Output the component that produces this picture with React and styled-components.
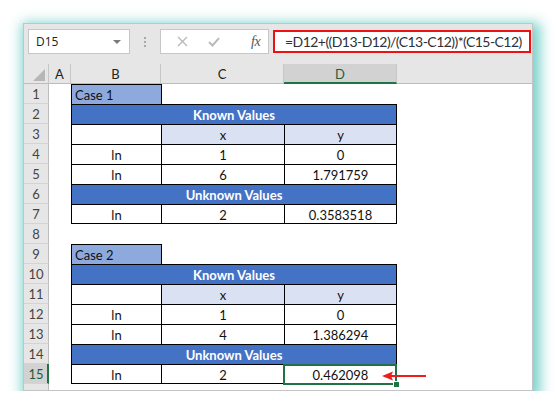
import React from "react";
import styled, { createGlobalStyle } from "styled-components";

const GlobalStyle = createGlobalStyle`
  html, body {
    margin: 0;
    padding: 0;
    background: #ffffff;
  }
  body {
    font-family: Lato, "Liberation Sans", sans-serif;
  }
`;

const COLS = "25px 22px 90px 123px 113px 1fr";
const GREEN = "#217346";
const LINE = "#000000";

const sheetRows = [
  { n: 1, type: "case", label: "Case 1" },
  { n: 2, type: "title", label: "Known Values" },
  { n: 3, type: "xy" },
  { n: 4, type: "data", values: ["ln", "1", "0"] },
  { n: 5, type: "data", values: ["ln", "6", "1.791759"] },
  { n: 6, type: "title", label: "Unknown Values" },
  { n: 7, type: "data", values: ["ln", "2", "0.3583518"], last: true },
  { n: 8, type: "empty" },
  { n: 9, type: "case", label: "Case 2" },
  { n: 10, type: "title", label: "Known Values" },
  { n: 11, type: "xy" },
  { n: 12, type: "data", values: ["ln", "1", "0"] },
  { n: 13, type: "data", values: ["ln", "4", "1.386294"] },
  { n: 14, type: "title", label: "Unknown Values" },
  { n: 15, type: "data", values: ["ln", "2", "0.462098"], last: true, active: true },
  { n: 16, type: "empty", hidden: true },
];

export default function App() {
  return (
    <>
      <GlobalStyle />
      <Window>
        <Toolbar>
          <NameBox>
            <span>D15</span>
            <DropCaret />
          </NameBox>
          <Grip>
            <i />
            <i />
            <i />
          </Grip>
          <FxButtons>
            <svg width="11" height="11" viewBox="0 0 11 11">
              <path d="M1 1 L10 10 M10 1 L1 10" stroke="#b9b9b9" strokeWidth="1.4" fill="none" />
            </svg>
            <svg width="12" height="10" viewBox="0 0 12 10">
              <path d="M1 5 L4.5 8.5 L11 1.2" stroke="#b9b9b9" strokeWidth="2" fill="none" />
            </svg>
            <FxLabel>fx</FxLabel>
          </FxButtons>
          <FormulaBox>=D12+((D13-D12)/(C13-C12))*(C15-C12)</FormulaBox>
        </Toolbar>

        <Sheet>
          <Corner>
            <CornerMark />
          </Corner>
          <ColHead>A</ColHead>
          <ColHead>B</ColHead>
          <ColHead>C</ColHead>
          <ColHead $selected>D</ColHead>
          <ColHead $last />

          {sheetRows.map((row) => (
            <React.Fragment key={row.n}>
              <RowHead $selected={row.active}>{row.hidden ? "" : row.n}</RowHead>
              <Cell />
              {renderRow(row)}
              <Cell />
            </React.Fragment>
          ))}

          <Arrow width="44" height="10" viewBox="0 0 44 10">
            <path d="M8 5 L44 5" stroke="#ee1c1c" strokeWidth="2" />
            <path d="M0 5 L11 0.5 L9 5 L11 9.5 Z" fill="#ee1c1c" />
          </Arrow>
        </Sheet>
      </Window>
    </>
  );
}

function renderRow(row) {
  if (row.type === "case") {
    return (
      <>
        <Cell $fill="#8ea9db" $bt $bl $align="flex-start">
          {row.label}
        </Cell>
        <Cell $bl />
        <Cell />
      </>
    );
  }
  if (row.type === "title") {
    return (
      <Cell $span={3} $fill="#4472c4" $bt $bl $br $bold $color="#ffffff">
        {row.label}
      </Cell>
    );
  }
  if (row.type === "xy") {
    return (
      <>
        <Cell $bt $bl />
        <Cell $fill="#d9e1f2" $bt $bl>
          x
        </Cell>
        <Cell $fill="#d9e1f2" $bt $bl $br>
          y
        </Cell>
      </>
    );
  }
  if (row.type === "data") {
    const [a, b, c] = row.values;
    return (
      <>
        <Cell $bt $bl $bb={row.last}>
          {a}
        </Cell>
        <Cell $bt $bl $bb={row.last}>
          {b}
        </Cell>
        <Cell $bt $bl $br $bb={row.last} $rel={row.active}>
          {c}
          {row.active && (
            <Selection>
              <Handle />
            </Selection>
          )}
        </Cell>
      </>
    );
  }
  return (
    <>
      <Cell />
      <Cell />
      <Cell />
    </>
  );
}

const Window = styled.div`
  margin: 23px 0 0 23px;
  width: 510px;
  height: 368px;
  box-sizing: border-box;
  border: 1px solid #c4c4c4;
  background: #ffffff;
  box-shadow: 3px 4px 12px 4px rgba(64, 190, 180, 0.72);
  display: flex;
  flex-direction: column;
  overflow: hidden;
`;

const Toolbar = styled.div`
  height: 40px;
  flex: none;
  background: #e6e6e6;
  display: flex;
  align-items: flex-start;
  padding: 5px 0 0 4px;
  box-sizing: border-box;
`;

const NameBox = styled.div`
  width: 102px;
  height: 25px;
  box-sizing: border-box;
  background: #ffffff;
  border: 1px solid #c6c6c6;
  display: flex;
  align-items: center;
  justify-content: space-between;
  padding: 0 8px 0 7px;
  font-family: "Open Sans", "Noto Sans", sans-serif;
  font-size: 12px;
  color: #222222;
`;

const DropCaret = styled.span`
  width: 0;
  height: 0;
  border-left: 4px solid transparent;
  border-right: 4px solid transparent;
  border-top: 4px solid #7a7a7a;
`;

const Grip = styled.div`
  width: 30px;
  height: 25px;
  display: flex;
  flex-direction: column;
  align-items: center;
  justify-content: center;
  gap: 2px;

  i {
    width: 2px;
    height: 2px;
    background: #a8a8a8;
  }
`;

const FxButtons = styled.div`
  width: 109px;
  height: 25px;
  box-sizing: border-box;
  background: #ffffff;
  border: 1px solid #c6c6c6;
  display: flex;
  align-items: center;
  padding-left: 16px;
  gap: 20px;
`;

const FxLabel = styled.span`
  margin-left: 11px;
  font-family: "Liberation Serif", serif;
  font-style: italic;
  font-size: 14px;
  color: #555555;
  letter-spacing: -0.5px;
`;

const FormulaBox = styled.div`
  margin: 1px 0 0 4px;
  width: 258px;
  height: 23px;
  box-sizing: border-box;
  background: #ffffff;
  border: 2px solid #ee1111;
  display: flex;
  align-items: center;
  padding: 0 0 0 10px;
  font-size: 14px;
  letter-spacing: -0.55px;
  color: #2c3038;
  white-space: nowrap;
`;

const Sheet = styled.div`
  flex: 1;
  position: relative;
  display: grid;
  grid-template-columns: ${COLS};
  grid-auto-rows: 20px;
  font-size: 13px;
  background: #ffffff;
`;

const Corner = styled.div`
  background: #e6e6e6;
  border-right: 1px solid #c6c6c6;
  border-bottom: 1px solid #bdbdbd;
  box-sizing: border-box;
  display: flex;
  align-items: flex-end;
  justify-content: flex-end;
  padding: 0 3px 2px 0;
`;

const CornerMark = styled.span`
  width: 0;
  height: 0;
  border-left: 12px solid transparent;
  border-bottom: 12px solid #b6b6b6;
`;

const ColHead = styled.div`
  box-sizing: border-box;
  background: ${(p) => (p.$selected ? "#d2d2d2" : "#e6e6e6")};
  border-right: ${(p) => (p.$last ? "none" : "1px solid #c6c6c6")};
  border-bottom: ${(p) => (p.$selected ? `2px solid ${GREEN}` : "1px solid #bdbdbd")};
  color: ${(p) => (p.$selected ? "#1f5c3b" : "#222222")};
  display: flex;
  align-items: center;
  justify-content: center;
  padding-top: ${(p) => (p.$selected ? "1px" : "0")};
`;

const RowHead = styled.div`
  box-sizing: border-box;
  background: ${(p) => (p.$selected ? "#d2d2d2" : "#e6e6e6")};
  border-right: ${(p) => (p.$selected ? `2px solid ${GREEN}` : "1px solid #bdbdbd")};
  border-bottom: 1px solid #d4d4d4;
  color: ${(p) => (p.$selected ? "#1f5c3b" : "#444444")};
  display: flex;
  align-items: center;
  justify-content: center;
  padding-left: ${(p) => (p.$selected ? "1px" : "0")};
`;

const Cell = styled.div`
  box-sizing: border-box;
  position: ${(p) => (p.$rel ? "relative" : "static")};
  grid-column: ${(p) => (p.$span ? `span ${p.$span}` : "auto")};
  background: ${(p) => p.$fill || "transparent"};
  color: ${(p) => p.$color || "#111111"};
  font-weight: ${(p) => (p.$bold ? 700 : 400)};
  border-top: ${(p) => (p.$bt ? `1px solid ${LINE}` : "none")};
  border-left: ${(p) => (p.$bl ? `1px solid ${LINE}` : "none")};
  border-right: ${(p) => (p.$br ? `1px solid ${LINE}` : "none")};
  border-bottom: ${(p) => (p.$bb ? `1px solid ${LINE}` : "none")};
  display: flex;
  align-items: center;
  justify-content: ${(p) => p.$align || "center"};
  padding: 1px 3px 0;
  white-space: nowrap;
`;

const Selection = styled.span`
  position: absolute;
  left: -2px;
  top: -1px;
  right: -1px;
  bottom: -2px;
  border: 2px solid ${GREEN};
  pointer-events: none;
`;

const Handle = styled.span`
  position: absolute;
  right: -5px;
  bottom: -5px;
  width: 5px;
  height: 5px;
  background: ${GREEN};
  border: 1px solid #ffffff;
`;

const Arrow = styled.svg`
  position: absolute;
  left: 358px;
  top: 307px;
`;
